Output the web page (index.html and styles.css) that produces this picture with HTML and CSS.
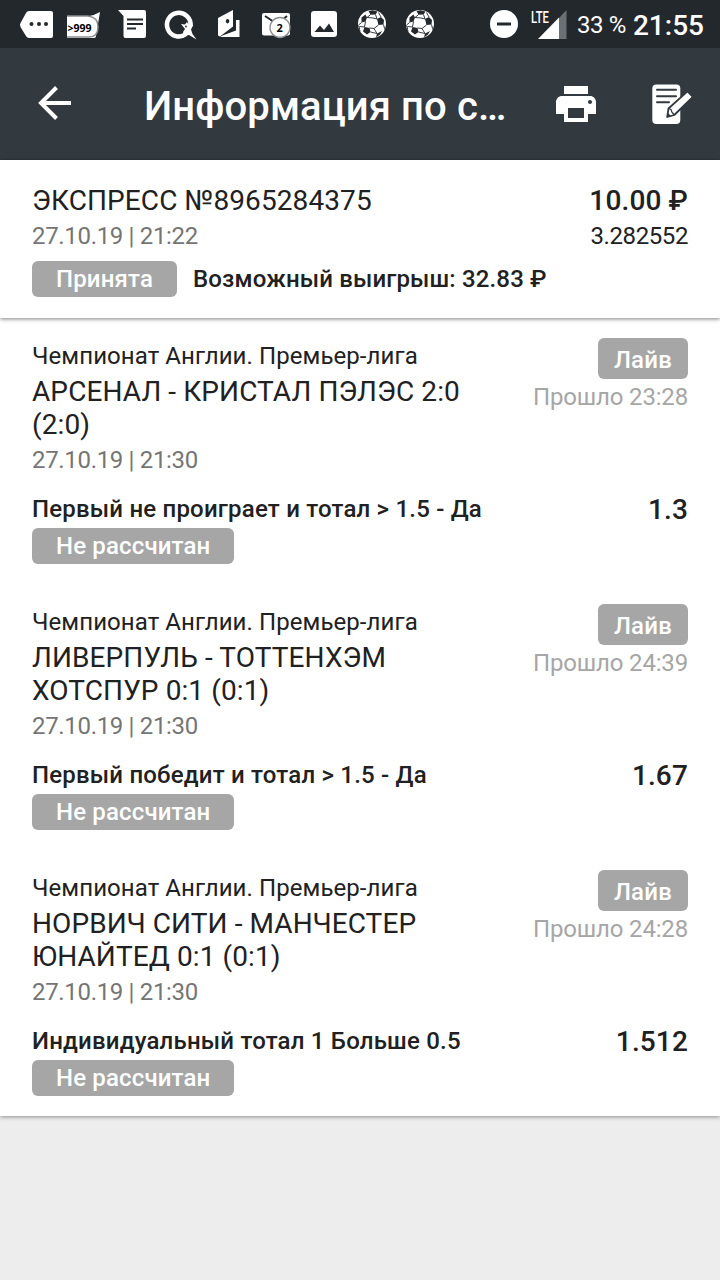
FILE: index.html
```html
<!DOCTYPE html>
<html lang="ru">
  <head>
    <title>Информация по ставке</title>
    <meta charset="UTF-8">
    <meta name="viewport" content="width=device-width">
    <link rel="stylesheet" href="styles.css">
  </head>

  <body>
    <!--System status bar-->
    <div class="statusbar">
      <div class="notifications">
        <svg class="icon" viewBox="0 0 32 32">
          <path fill="#fff" d="M9 3h22q2 0 2 2v23q0 2-2 2H9Q7 30 6 28L0.5 19q-1-2.500 0-4L6 5Q7 3 9 3z"/>
          <circle cx="11.500" cy="16" r="2" fill="#23282c"/>
          <circle cx="19" cy="16" r="2" fill="#23282c"/>
          <circle cx="26" cy="16" r="2" fill="#23282c"/>
        </svg>
        <svg class="icon" viewBox="0 0 32 32">
          <path fill="#fff" d="M-1 8H21Q27 7 32 4L28 28q0 2-2 2H-1z"/>
          <path fill="#fff" stroke="#8b8d8f" stroke-width="1.500" d="M-1 8H20q10 1 10 11t-9 10H-1"/>
          <text class="count" x="-0.500" y="24" textLength="24" lengthAdjust="spacingAndGlyphs">&gt;999</text>
        </svg>
        <svg class="icon" viewBox="0 0 32 32">
          <path fill="#fff" d="M2 2h26q2 0 2 2v24q0 2-2 2H9.500q-2 0-2-2V8z"/>
          <path stroke="#23282c" stroke-width="2" d="M11 11.500h16M11 16h16M11 20.500h9"/>
        </svg>
        <svg class="icon" viewBox="0 0 32 32">
          <path fill="none" stroke="#fff" stroke-width="4.500" d="M22 26A11.800 11.800 0 1 1 26.500 18"/>
          <path fill="#fff" d="M17 16l4 0.500 2-2.500 1.500 2.500 3.500-1 1 2-2 4 1.500 4.500 4 5.500-7.500-4.500-5 1-1-4 2-3z"/>
          <circle cx="22" cy="18.500" r="0.900" fill="#23282c"/>
        </svg>
        <svg class="icon" viewBox="0 0 32 32">
          <path fill="#fff" fill-rule="evenodd" d="M6 10L21 2v16.500L8 28.500l-2-1zM15.500 11a1.800 2.200 0 1 0 0.100 0z"/>
          <path fill="#fff" d="M24 12h3.500v17H8l2.500-1.500L24 22.500z"/>
        </svg>
        <svg class="icon" viewBox="0 0 32 32">
          <rect x="2" y="5" width="28" height="22.500" rx="2" fill="#fff"/>
          <path fill="none" stroke="#23282c" stroke-width="2" d="M5 8l9 6M27 8l-3 2.500"/>
          <circle cx="20" cy="19.500" r="10" fill="#fff" stroke="#8b8d8f" stroke-width="1.300"/>
          <text class="count" x="16.500" y="23.500">2</text>
        </svg>
        <svg class="icon" viewBox="0 0 32 32">
          <rect x="3" y="3" width="26" height="26" rx="3" fill="#fff"/>
          <path fill="#23282c" d="M6.500 24l5.500-6.500 4 4.500 5-6.500L26 24z"/>
        </svg>
        <svg class="icon" viewBox="0 0 32 32">
          <g id="ball">
            <circle cx="16" cy="16" r="14" fill="#fff"/>
            <path fill="#23282c" d="M12.500 3l4-0.800 5 1.300-2 3-5 0.200zM5.500 9.500L9.500 6.500l1.500 3-1.500 4-4 1zM21 11l4-2 3 3-0.500 4.500-5 0.500zM8.500 19l5 1 1 4-3.500 2.500-4-3zM2 17l1.500 1.500 1 5.500-1-1.500zM21 25.500l5-2.500-2 3.500-4 3zM28.500 20l1.300-2-1.300 5z"/>
            <path stroke="#23282c" stroke-width="0.900" fill="none" d="M11 9.500l3.500-2.800M19.500 6.500L21 11M9.500 13.500l-1 5.500M11 9.500l6 0.500 4 1M13.500 20l4.500 0.500 4.500-3.500M18 20.500l3 5M14.500 24l6.500 1.500M27.500 16.500l1 4M5.500 14.500L2.500 17M8.500 19l-5-0.500M25 9l-2.500-4.500"/>
          </g>
        </svg>
        <svg class="icon" viewBox="0 0 32 32"><use href="#ball"/></svg>
      </div>
      <svg class="dnd" viewBox="0 0 32 32">
        <circle cx="16" cy="16" r="14" fill="#fff"/>
        <path stroke="#23282c" stroke-width="3" d="M9 16h14"/>
      </svg>
      <svg class="signal" viewBox="0 0 38 32">
        <path fill="#6b7074" d="M36.500 2v29H29V10z"/>
        <path fill="#fff" d="M29 9.500V31H8z"/>
        <text class="lte" x="1" y="15" textLength="18" lengthAdjust="spacingAndGlyphs">LTE</text>
      </svg>
      <span class="battery">33 %</span>
      <span class="clock">21:55</span>
    </div>

    <!--Title bar-->
    <div class="appbar">
      <svg class="back" viewBox="0 0 48 48">
        <path fill="none" stroke="#fff" stroke-width="4" d="M25.500 8.500L10 24l15.500 15.500M10 24h30"/>
      </svg>
      <h1>Информация по с…</h1>
      <svg class="print" viewBox="0 0 24 24">
        <path fill="#fff" d="M19 8H5c-1.660 0-3 1.340-3 3v6h4v4h12v-4h4v-6c0-1.660-1.340-3-3-3zm-3 11H8v-5h8v5zm3-7c-.55 0-1-.45-1-1s.45-1 1-1 1 .45 1 1-.45 1-1 1zm-1-9H6v4h12V3z"/>
      </svg>
      <svg class="edit" viewBox="0 0 40 40">
        <rect x="0.300" y="0.500" width="28" height="39.500" rx="4" fill="#fff"/>
        <path stroke="#32393f" stroke-width="2" stroke-linecap="round" d="M5 5.800h19M5 12.200h19M5 18.200h12"/>
        <path fill="#fff" stroke="#32393f" stroke-width="1.800" stroke-linejoin="round" d="M15.200 33l1.300-8.500L35.500 7.300l5.300 5.700L22.300 31z"/>
        <path fill="none" stroke="#32393f" stroke-width="1.200" d="M16.500 24.500l2.500 1 0.800 2.500 2.500 3"/>
        <path fill="#32393f" d="M15.200 33l0.800-4 3 3z"/>
      </svg>
    </div>

    <!--Coupon summary-->
    <div class="summary">
      <div class="row">
        <span class="big">ЭКСПРЕСС №8965284375</span>
        <span class="big bold">10.00 ₽</span>
      </div>
      <div class="row second">
        <span class="date">27.10.19 | 21:22</span>
        <span class="total">3.282552</span>
      </div>
      <div class="result">
        <span class="badge">Принята</span>
        <span class="bold">Возможный выигрыш: 32.83 ₽</span>
      </div>
    </div>

    <!--Events-->
    <div class="events">
      <div class="event">
        <div class="row">
          <div class="match">
            <div class="league">Чемпионат Англии. Премьер-лига</div>
            <div class="big teams">АРСЕНАЛ - КРИСТАЛ ПЭЛЭС 2:0 (2:0)</div>
            <div class="date">27.10.19 | 21:30</div>
          </div>
          <div class="live">
            <span class="live-badge">Лайв</span>
            <span class="elapsed">Прошло 23:28</span>
          </div>
        </div>
        <div class="row bet">
          <span class="bold outcome">Первый не проиграет и тотал &gt; 1.5 - Да</span>
          <span class="big bold">1.3</span>
        </div>
        <span class="badge">Не рассчитан</span>
      </div>

      <div class="event">
        <div class="row">
          <div class="match">
            <div class="league">Чемпионат Англии. Премьер-лига</div>
            <div class="big teams">ЛИВЕРПУЛЬ - ТОТТЕНХЭМ ХОТСПУР 0:1 (0:1)</div>
            <div class="date">27.10.19 | 21:30</div>
          </div>
          <div class="live">
            <span class="live-badge">Лайв</span>
            <span class="elapsed">Прошло 24:39</span>
          </div>
        </div>
        <div class="row bet">
          <span class="bold outcome">Первый победит и тотал &gt; 1.5 - Да</span>
          <span class="big bold">1.67</span>
        </div>
        <span class="badge">Не рассчитан</span>
      </div>

      <div class="event">
        <div class="row">
          <div class="match">
            <div class="league">Чемпионат Англии. Премьер-лига</div>
            <div class="big teams">НОРВИЧ СИТИ - МАНЧЕСТЕР ЮНАЙТЕД 0:1 (0:1)</div>
            <div class="date">27.10.19 | 21:30</div>
          </div>
          <div class="live">
            <span class="live-badge">Лайв</span>
            <span class="elapsed">Прошло 24:28</span>
          </div>
        </div>
        <div class="row bet">
          <span class="bold outcome">Индивидуальный тотал 1 Больше 0.5</span>
          <span class="big bold">1.512</span>
        </div>
        <span class="badge">Не рассчитан</span>
      </div>
    </div>
  </body>
</html>
```

FILE: styles.css
```css
* {box-sizing: border-box;}
body {
	margin: 0;
	min-height: 1280px;
	background-color: #ededed;
	color: #212121;
	font-family: Roboto, "Liberation Sans", sans-serif;
	font-size: 24px;
	line-height: 28px;
}
svg {
	display: block;
	flex: none;
	overflow: visible;
}

/* Status bar */
.statusbar {
	display: flex;
	height: 48px;
	padding: 8px 16px 8px 20px;
	background-color: #23282c;
	color: #fff;
	white-space: nowrap;
}
.notifications {
	display: flex;
	gap: 16px;
}
.icon, .dnd {
	width: 32px;
	height: 32px;
}
.dnd {
	margin-left: 52px;
}
.signal {
	width: 38px;
	height: 32px;
	margin-left: 10px;
}
.count {
	font-family: "Open Sans", sans-serif;
	font-size: 11px;
	font-weight: bold;
	fill: #000;
}
.lte {
	font-size: 17px;
	font-weight: 500;
	fill: #fff;
}
.battery {
	margin-left: 9px;
	padding-top: 3px;
	letter-spacing: -0.4px;
}
.clock {
	margin-left: auto;
	font-size: 28px;
	font-weight: 500;
	line-height: 35px;
}

/* Title bar */
.appbar {
	display: flex;
	align-items: flex-start;
	height: 112px;
	padding: 31px 28px 0 31px;
	background-color: #32393f;
	color: #fff;
}
.back {
	width: 48px;
	height: 48px;
}
h1 {
	flex: 1;
	margin: 4px 0 0 65px;
	font-size: 40px;
	font-weight: 500;
	line-height: 47px;
	letter-spacing: 0.1px;
	white-space: nowrap;
}
.print {
	width: 48px;
	height: 48px;
	margin: 1px 52px 0 0;
}
.edit {
	width: 40px;
	height: 40px;
	margin-top: 5px;
}

/* Shared pieces */
.row {
	display: flex;
	justify-content: space-between;
}
.big {
	font-size: 28px;
	line-height: 33px;
	letter-spacing: 0.1px;
}
.bold {
	font-weight: 500;
	letter-spacing: 0.15px;
}
.date {
	color: #757575;
	letter-spacing: -0.33px;
}
.badge {
	display: inline-block;
	height: 36px;
	padding: 4px 24px;
	background-color: #a6a6a6;
	border-radius: 6px;
	color: #fff;
	font-weight: 500;
	letter-spacing: 0.15px;
	vertical-align: top;
}

.summary {
	position: relative;
	height: 158px;
	padding: 24px 32px 0;
	background-color: #fff;
	box-shadow: 0 1px 4px rgba(0, 0, 0, 0.5);
}
.second {margin-top: 5px;}
.total {letter-spacing: -0.4px;}
.result {
	display: flex;
	align-items: center;
	gap: 16px;
	margin-top: 11px;
}

.events {
	background-color: #fff;
	box-shadow: 0 1px 4px rgba(0, 0, 0, 0.4);
}
.event {
	height: 266px;
	padding: 20px 32px;
}
.match {
	width: 450px;
	padding-top: 4px;
}
.league {letter-spacing: 0.08px;}
.teams {
	margin: 5px 0;
}
.live {
	display: flex;
	flex-direction: column;
	align-items: flex-end;
	white-space: nowrap;
}
.live-badge {
	height: 41px;
	padding: 8px 16px 5px;
	background-color: #a6a6a6;
	border-radius: 6px;
	color: #fff;
	font-weight: 500;
	letter-spacing: 0.2px;
}
.elapsed {
	margin-top: 4px;
	color: #a6a6a6;
	letter-spacing: -0.17px;
}
.bet {
	align-items: flex-start;
	height: 33px;
	margin: 19px 0 2px;
}
.outcome {
	margin-top: 2px;
	letter-spacing: 0.2px;
}
```
